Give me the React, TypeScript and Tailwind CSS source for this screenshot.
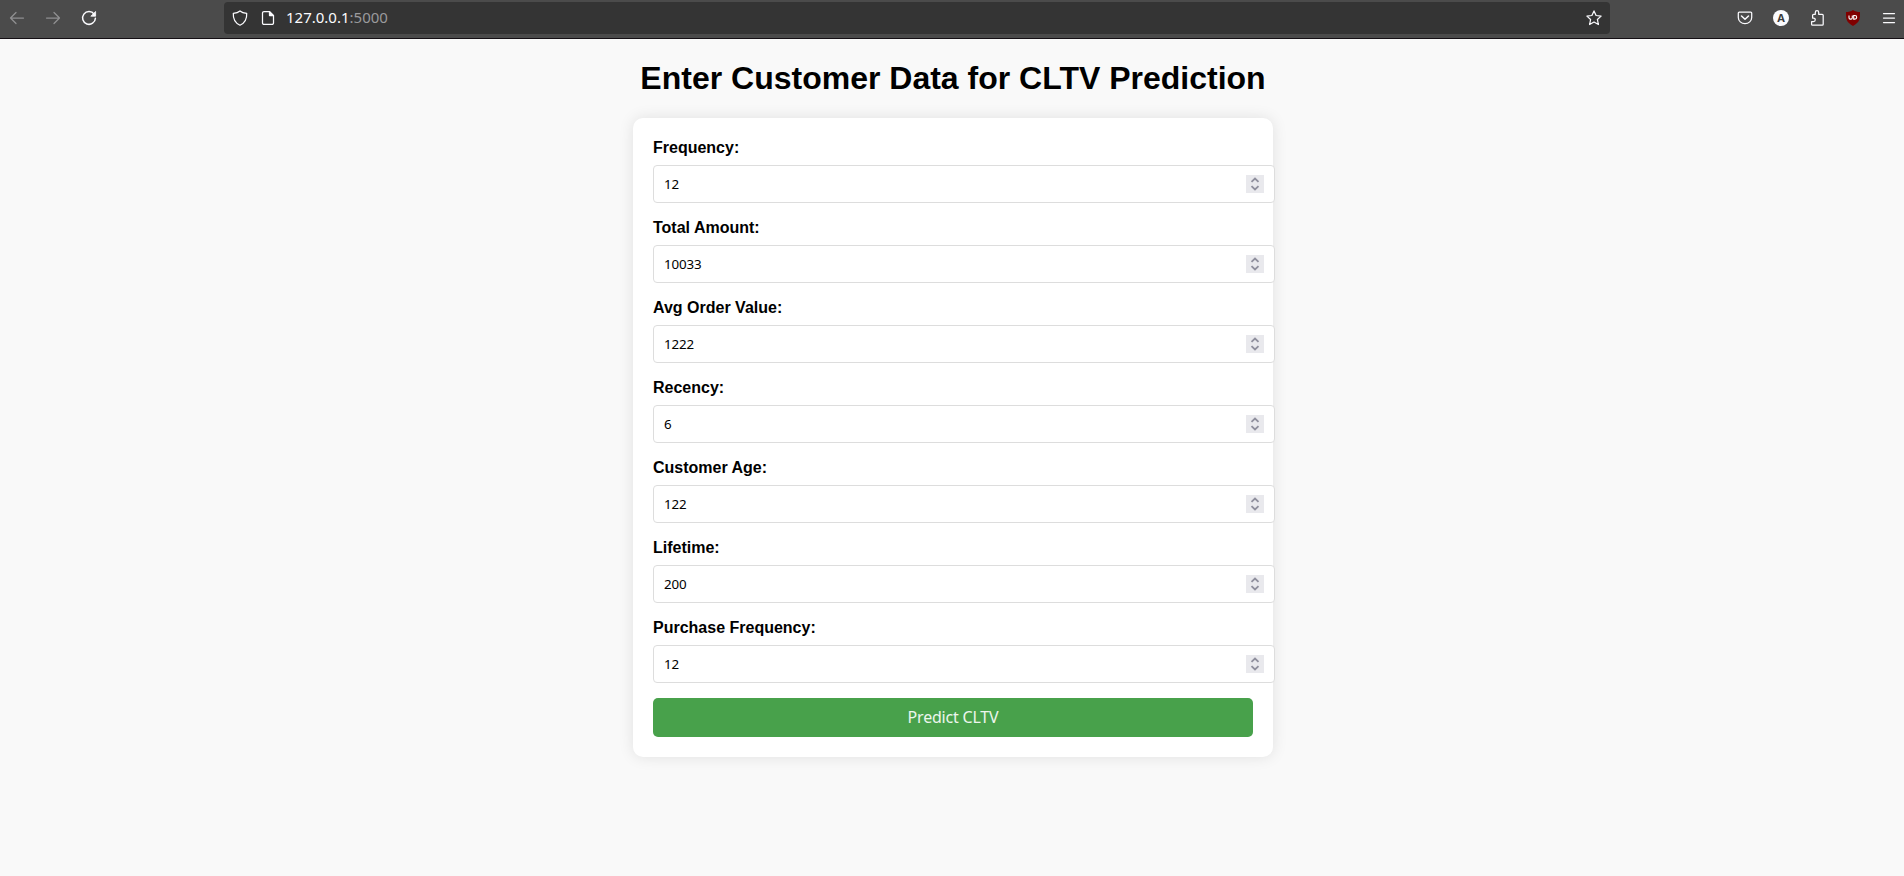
import { useState } from "react";

const fields = [
  { label: "Frequency:", value: "12" },
  { label: "Total Amount:", value: "10033" },
  { label: "Avg Order Value:", value: "1222" },
  { label: "Recency:", value: "6" },
  { label: "Customer Age:", value: "122" },
  { label: "Lifetime:", value: "200" },
  { label: "Purchase Frequency:", value: "12" },
];

const stroke = {
  fill: "none",
  stroke: "currentColor",
  strokeWidth: 1.25,
  strokeLinecap: "round" as const,
  strokeLinejoin: "round" as const,
};

function Toolbar() {
  return (
    <header className="flex h-[39px] items-start border-b border-[#140f14] bg-[#4b4b4b] text-[#fbfbfe]">
      <div className="flex w-[224px] shrink-0 gap-5 pt-[10px] pl-[9px]">
        <svg className="size-4 text-[#8f8f91]" viewBox="0 0 16 16" {...stroke}>
          <path d="M14.5 8H1.5M7 2.5 1.5 8 7 13.5" />
        </svg>
        <svg className="size-4 text-[#8f8f91]" viewBox="0 0 16 16" {...stroke}>
          <path d="M1.5 8h13M9 2.5 14.5 8 9 13.5" />
        </svg>
        <svg className="size-4" viewBox="0 0 16 16" {...stroke} strokeWidth={1.5}>
          <path d="M13.2 4.2A6.4 6.4 0 1 0 14.4 8.2" />
          <path d="M14.6 1.8v4.4h-4.4z" fill="currentColor" strokeWidth={0.8} />
        </svg>
      </div>
      <div className="mt-[2px] flex h-8 w-[1386px] shrink-0 items-center rounded-[4px] bg-[#343434] pr-2 pl-2">
        <svg className="size-4" viewBox="0 0 16 16" {...stroke}>
          <path d="M8 .9C10 2.6 12.200 3.100 14.700 3.400C15 8.500 13 13 8 15.200C3 13 1 8.500 1.300 3.400C3.800 3.100 6 2.600 8 .9Z" />
        </svg>
        <svg className="ml-3 size-4" viewBox="0 0 16 16" {...stroke}>
          <path d="M9.500 1.600H4A1.500 1.500 0 0 0 2.500 3.100v9.800A1.500 1.500 0 0 0 4 14.400h8a1.500 1.500 0 0 0 1.500-1.500V5.600z" />
          <path d="M9.500 1.600v4h4z" fill="currentColor" />
        </svg>
        <span className="ml-[10px] pb-[2px] font-['Noto_Sans',sans-serif] text-[15px] leading-5">
          127.0.0.1<span className="text-[#9a9a9c]">:5000</span>
        </span>
        <svg className="ml-auto size-4" viewBox="0 0 16 16" {...stroke}>
          <path d="M8 .9l2.100 4.600 5 .6-3.700 3.400 1 5L8 12l-4.400 2.500 1-5L.9 6.100l5-.6z" />
        </svg>
      </div>
      <div className="ml-auto flex gap-5 pt-[10px] pr-[7px]">
        <svg className="size-4" viewBox="0 0 16 16" {...stroke}>
          <path d="M2.300 2h11.400c.6 0 1 .4 1 1v4.500a6.700 6.200 0 0 1-13.400 0V3c0-.6.4-1 1-1z" />
          <path d="M4.500 6 8 9.300 11.500 6" strokeWidth={1.500} />
        </svg>
        <div className="flex size-4 items-center justify-center rounded-full bg-[#fbfbfe] font-['Open_Sans',sans-serif] text-[11px] leading-4 font-bold text-[#3c3c3c]">
          A
        </div>
        <svg className="size-4 overflow-visible" viewBox="0 0 16 16" {...stroke}>
          <path d="M6.300 4.300V2.400a1.700 1.700 0 0 1 3.400 0v1.900h3.500c.6 0 1 .4 1 1v8.900c0 .6-.4 1-1 1H3.600c-.6 0-1-.4-1-1v-2.500h1.800a1.700 1.700 0 0 0 0-3.700H3.600V5.300c0-.6.4-1 1-1z" />
        </svg>
        <svg className="size-4" viewBox="0 0 16 16">
          <path d="M8 0c2 1.500 4.500 2 7 2 0 7 0 10-7 14C1 12 1 9 1 2c2.500 0 5-.5 7-2z" fill="#800000" />
          <path d="M4 5.500v2.300q0 1.300 1.300 1.300H6q1.300 0 1.300-1.300V5.500M8.700 5.500v3.600h1.200q1.800 0 1.800-1.800t-1.800-1.800z" fill="none" stroke="#fff" strokeWidth="1.1" />
        </svg>
        <svg className="size-4" viewBox="0 0 16 16" {...stroke}>
          <path d="M2.500 3.500h11M2.500 8h11M2.500 12.500h11" />
        </svg>
      </div>
    </header>
  );
}

function NumberField({ label, initial }: { label: string; initial: string }) {
  const [value, setValue] = useState(initial);
  const step = (by: number) => setValue(String(Number(value) + by));
  return (
    <div className="mb-[15px]">
      <label className="block h-[27px] pt-px text-base leading-[18px] font-bold">{label}</label>
      <div className="flex h-[38px] w-[622px] items-center rounded-[4px] border border-[#dddddd] bg-white px-[10px]">
        <input
          className="min-w-0 flex-1 pt-[2px] font-['Noto_Sans',sans-serif] text-[13.33px] tracking-[-0.1px] outline-none"
          aria-label={label}
          value={value}
          onChange={(e) => setValue(e.target.value)}
        />
        <div className="flex h-[18px] w-[18px] flex-col bg-[#e9e9ed] text-[#8f8f9d]">
          <button className="h-[9px]" onClick={() => step(1)}>
            <svg className="block h-[9px] w-[18px]" viewBox="0 0 18 9" fill="none" stroke="currentColor" strokeWidth="1.8">
              <path d="M5.500 6.800 9 3.500l3.500 3.300" />
            </svg>
          </button>
          <button className="h-[9px]" onClick={() => step(-1)}>
            <svg className="block h-[9px] w-[18px]" viewBox="0 0 18 9" fill="none" stroke="currentColor" strokeWidth="1.8">
              <path d="M5.500 2.200 9 5.500l3.500-3.300" />
            </svg>
          </button>
        </div>
      </div>
    </div>
  );
}

export default function App() {
  return (
    <div className="min-h-screen bg-[#f9f9f9] font-['Liberation_Sans',Arial,sans-serif] text-black">
      <Toolbar />
      <main className="flex flex-col items-center pt-[21px] pl-[2px]">
        <h1 className="mb-[21px] text-[32px] leading-[37px] font-bold">Enter Customer Data for CLTV Prediction</h1>
        <section className="w-[640px] rounded-[10px] bg-white p-5 shadow-[0_0_15px_rgba(0,0,0,0.1)]">
          {fields.map((f) => (
            <NumberField key={f.label} label={f.label} initial={f.value} />
          ))}
          <button className="block h-[39px] w-full rounded-[5px] bg-[#48a14b] pb-[2px] font-['Noto_Sans',sans-serif] text-base tracking-[-0.2px] font-normal text-white/90">
            Predict CLTV
          </button>
        </section>
      </main>
    </div>
  );
}
